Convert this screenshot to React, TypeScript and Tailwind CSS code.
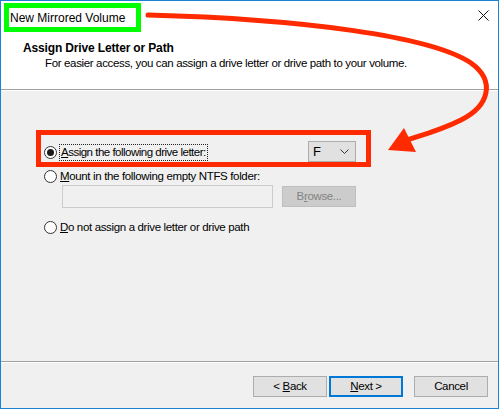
const font = { fontFamily: '"Liberation Sans", Arial, sans-serif' };

function Radio({ checked }: { checked?: boolean }) {
  return (
    <div className="w-[13px] h-[13px] shrink-0 rounded-full border border-[#333333] bg-white flex items-center justify-center">
      {checked && <div className="w-[7px] h-[7px] rounded-full bg-[#1a1a1a]" />}
    </div>
  );
}

function Btn({ children, focused }: { children: React.ReactNode; focused?: boolean }) {
  return (
    <div
      className={
        "w-[74px] h-[21px] flex items-center justify-center bg-[#e1e1e1] text-black " +
        (focused ? "border-2 border-[#0078d7]" : "border border-[#adadad]")
      }
    >
      {children}
    </div>
  );
}

export default function App() {
  return (
    <div className="relative w-[499px] h-[409px] border border-[#1883d7] bg-[#f0f0f0] flex flex-col text-black" style={font}>
      {/* header */}
      <div className="h-[88px] bg-white flex flex-col">
        <div className="flex items-start">
          <div className="mt-[2px] ml-[3px] w-[137px] h-[29px] border-[5px] border-[#00ff00] pl-[1px] flex items-center text-[12px]">
            New Mirrored Volume
          </div>
          <svg className="ml-auto mt-[9px] mr-[9px]" width="11" height="11" viewBox="0 0 11 11">
            <path d="M0.5 0.5 L10.5 10.5 M10.5 0.5 L0.5 10.5" stroke="#111" strokeWidth="1" />
          </svg>
        </div>
        <div className="mt-[9px] pl-[22px] text-[12px] leading-[15px] font-bold tracking-[-0.15px]">
          Assign Drive Letter or Path
        </div>
        <div className="pl-[44px] text-[11.5px] leading-[15px] tracking-[-0.35px]">
          For easier access, you can assign a drive letter or drive path to your volume.
        </div>
      </div>
      <div className="h-px bg-[#a0a0a0]" />
      <div className="h-px bg-white" />

      {/* body */}
      <div className="h-[270px] flex flex-col text-[11.5px] tracking-[-0.35px]">
        <div className="mt-[39px] ml-[35px] w-[335px] h-[37px] border-[5px] border-[#ff2a00] flex items-start pl-[3px]">
          <div className="mt-[11px]">
            <Radio checked />
          </div>
          <div className="mt-[9px] ml-[2px] h-[17px] px-[1px] border border-dotted border-[#222] flex items-center leading-none tracking-[-0.5px]">
            <span className="underline">A</span>ssign the following drive letter:
          </div>
          <div className="ml-auto mr-[10px] mt-[6px] w-[48px] h-[21px] bg-[#e1e1e1] border border-[#adadad] flex items-center pl-[4px] pr-[6px]">
            <span className="text-[13px]">F</span>
            <svg className="ml-auto" width="9" height="5" viewBox="0 0 9 5">
              <path d="M0.5 0.5 L4.5 4.5 L8.5 0.5" fill="none" stroke="#333" strokeWidth="1" />
            </svg>
          </div>
        </div>

        <div className="mt-[3px] ml-[43px] flex items-center gap-[3px] h-[13px]">
          <Radio />
          <span>
            <span className="underline">M</span>ount in the following empty NTFS folder:
          </span>
        </div>
        <div className="mt-[2px] ml-[61px] flex items-start">
          <div className="w-[211px] h-[23px] bg-[#f0f0f0] border border-[#cccccc]" />
          <div className="ml-[9px] mt-px w-[74px] h-[21px] bg-[#cccccc] border border-[#bfbfbf] flex items-center justify-center text-[#838383]">
            B<span className="underline">r</span>owse...
          </div>
        </div>

        <div className="mt-[13px] ml-[43px] flex items-center gap-[3px] h-[13px]">
          <Radio />
          <span>
            <span className="underline">D</span>o not assign a drive letter or drive path
          </span>
        </div>
      </div>
      <div className="h-px bg-[#a0a0a0]" />
      <div className="h-px bg-white" />

      {/* footer */}
      <div className="flex-1 flex items-start pt-[13px] pr-[10px] justify-end text-[11.5px] tracking-[-0.35px]">
        <Btn>
          &lt; <span className="underline ml-[3px]">B</span>ack
        </Btn>
        <div className="ml-[2px]">
          <Btn focused>
            <span className="underline">N</span>ext &gt;
          </Btn>
        </div>
        <div className="ml-[11px]">
          <Btn>Cancel</Btn>
        </div>
      </div>

      {/* annotation arrow */}
      <svg className="absolute top-0 left-0 pointer-events-none" width="499" height="409" viewBox="0 0 499 409">
        <path
          d="M147 14 C 300 18, 430 35, 470 62 C 495 80, 488 105, 460 119 C 440 129, 425 133, 406 139"
          fill="none"
          stroke="#ff2a00"
          strokeWidth="5"
          strokeLinecap="round"
        />
        <polygon points="387,149 403,127 415,151" fill="#ff2a00" />
      </svg>
    </div>
  );
}
